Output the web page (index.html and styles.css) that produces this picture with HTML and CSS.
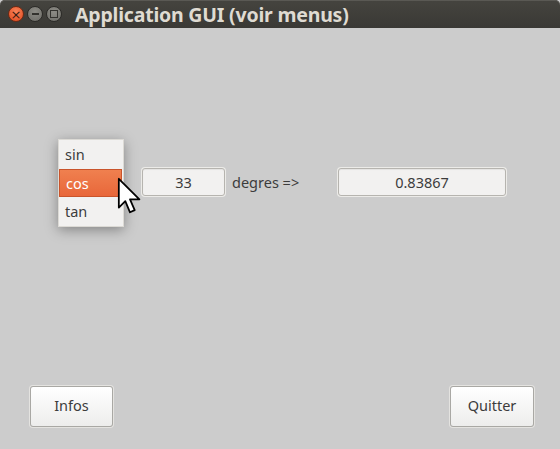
FILE: index.html
```html
<!DOCTYPE html>
<html lang="fr">
<head>
    <meta charset="UTF-8">
    <title>Application GUI (voir menus)</title>
    <link rel="stylesheet" href="styles.css">
</head>
<body>
    <div class="window">
        <div class="titlebar">
            <div class="controls">
                <span class="wbtn close">&times;</span>
                <span class="wbtn minimize"><span class="bar"></span></span>
                <span class="wbtn maximize"><span class="box"></span></span>
            </div>
            <span class="title">Application GUI (voir menus)</span>
        </div>

        <div class="content">
            <div class="calc-row">
                <div class="option-slot">
                    <ul class="popup">
                        <li>sin</li>
                        <li class="active">cos</li>
                        <li>tan</li>
                    </ul>
                    <svg class="cursor" width="26" height="40" viewBox="0 0 22 34">
                        <path d="M1.5 1.5 L1.5 26 L7 20.5 L11 30 L15 28.2 L11 19 L19 19 Z" fill="#fff" stroke="#000" stroke-width="1.5" stroke-linejoin="round"/>
                    </svg>
                </div>
                <div class="entry angle">33</div>
                <span class="label">degres =&gt;</span>
                <div class="entry result">0.83867</div>
            </div>

            <div class="actions">
                <button class="btn">Infos</button>
                <button class="btn">Quitter</button>
            </div>
        </div>
    </div>
</body>
</html>
```

FILE: styles.css
```css
html, body {
    margin: 0;
    padding: 0;
}
body {
    width: 560px;
    height: 449px;
    overflow: hidden;
    font-family: "Noto Sans", "DejaVu Sans", sans-serif;
    font-size: 14.5px;
    color: #3c3c3c;
    background: #cccccc;
}
.window {
    display: flex;
    flex-direction: column;
    height: 449px;
}
.titlebar {
    height: 28px;
    flex: none;
    display: flex;
    align-items: center;
    background: linear-gradient(#45443f, #3a3935);
    border-radius: 5px 5px 0 0;
    box-shadow: inset 0 1px 0 #5a5954;
}
.controls {
    display: flex;
    gap: 3px;
    margin-left: 8px;
}
.wbtn {
    width: 16px;
    height: 16px;
    border-radius: 50%;
    display: flex;
    align-items: center;
    justify-content: center;
    box-sizing: border-box;
}
.close {
    background: radial-gradient(circle at 50% 35%, #f8845a, #e0471c);
    border: 1px solid #6e2a14;
    color: #3a1a10;
    font-size: 13px;
    line-height: 1;
    font-family: "DejaVu Sans", sans-serif;
}
.minimize,
.maximize {
    background: radial-gradient(circle at 50% 35%, #8d8c86, #6c6b66);
    border: 1px solid #2c2b28;
}
.bar {
    width: 7px;
    height: 2px;
    background: #33322e;
}
.box {
    width: 6px;
    height: 6px;
    border: 1px solid #33322e;
}
.title {
    margin-left: 13px;
    font-weight: bold;
    font-size: 19.5px;
    color: #dfdbd2;
    letter-spacing: -0.2px;
}
.content {
    flex: 1;
    display: flex;
    flex-direction: column;
    padding: 140px 26px 22px 30px;
}
.calc-row {
    display: flex;
    align-items: center;
    margin-left: 28px;
    height: 28px;
}
.option-slot {
    position: relative;
    width: 66px;
    height: 28px;
    margin-right: 18px;
}
.popup {
    position: absolute;
    left: 0;
    top: -29px;
    width: 66px;
    margin: 0;
    padding: 0;
    list-style: none;
    background: #f2f1f0;
    border: 1px solid #dcdad5;
    box-sizing: border-box;
    box-shadow: 0 3px 12px rgba(0, 0, 0, 0.35);
}
.popup li {
    height: 29px;
    line-height: 29px;
    padding-left: 6px;
}
.popup li.active {
    height: 28px;
    line-height: 26px;
    background: linear-gradient(#f0804f, #e8673a);
    color: #fff;
    border: 1px solid #c9542b;
    margin: 0 1px 0 0;
    box-sizing: border-box;
}
.cursor {
    position: absolute;
    left: 59px;
    top: 9px;
}
.entry {
    height: 28px;
    box-sizing: border-box;
    background: #f2f1f0;
    border: 1px solid #b6b4af;
    border-radius: 3px;
    box-shadow: 0 0 0 1px #ecebe8, inset 0 1px 1px rgba(0, 0, 0, 0.06);
    display: flex;
    align-items: center;
    justify-content: center;
}
.angle {
    width: 83px;
}
.label {
    margin-left: 7px;
    width: 106px;
}
.result {
    width: 168px;
}
.actions {
    margin-top: auto;
    display: flex;
    justify-content: space-between;
}
.btn {
    width: 83px;
    height: 41px;
    font-family: inherit;
    font-size: 14.5px;
    color: #3c3c3c;
    background: linear-gradient(#ffffff, #ededec);
    border: 1px solid #a9a8a4;
    border-radius: 3px;
    box-shadow: 0 0 0 1px #e4e3e0;
    padding: 0 0 3px;
}
.btn + .btn {
    width: 84px;
}
```
